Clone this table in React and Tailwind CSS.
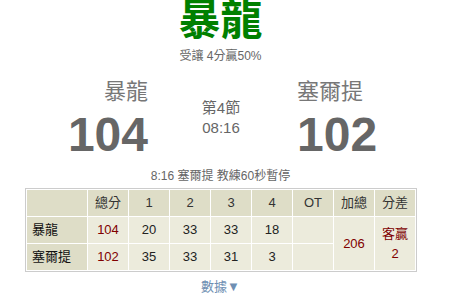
const CJK = "font-['Liberation_Sans','Noto_Sans_CJK_TC',sans-serif]";

const quarters = [
  { team: '暴龍', total: 104, q: [20, 33, 33, 18] },
  { team: '塞爾提', total: 102, q: [35, 33, 31, 3] },
];

export default function App() {
  return (
    <div className={`w-[441px] bg-white text-center text-[#666] ${CJK}`}>
      <div className="text-[42px] font-bold leading-[42px] text-[#008000]">暴龍</div>
      <div className="mt-[7px] text-[12px] leading-[14px]">受讓 4分贏50%</div>

      <div className="flex mt-[14px]">
        <div className="w-[148px] text-right">
          <div className="text-[22px] leading-[30px] text-[#777]">暴龍</div>
          <div className="mt-[3px] text-[48px] font-bold leading-[50px] text-[#666]">104</div>
        </div>
        <div className="w-[146px] pt-[21px] text-[15px] leading-[20px] text-[#666]">
          <div>第4節</div>
          <div>08:16</div>
        </div>
        <div className="pl-[3px] text-left">
          <div className="text-[22px] leading-[30px] text-[#777]">塞爾提</div>
          <div className="mt-[3px] text-[48px] font-bold leading-[50px] text-[#666]">102</div>
        </div>
      </div>

      <div className="mt-[9px] text-[12px] leading-[14px]">8:16 塞爾提 教練60秒暫停</div>

      <table className="mt-[5px] ml-[25px] border border-[#cccccc] border-separate border-spacing-[1px] bg-white text-[13px] text-[#222]">
        <thead>
          <tr className="h-[26px] bg-[#deddc7]">
            <th className="w-[60px] p-0 font-normal"></th>
            {['總分', '1', '2', '3', '4', 'OT', '加總', '分差'].map((h) => (
              <th key={h} className="w-[40px] p-0 font-normal text-[#333]">{h}</th>
            ))}
          </tr>
        </thead>
        <tbody>
          {quarters.map((row, i) => (
            <tr key={row.team} className="h-[26px]">
              <td className="bg-[#deddc7] p-0 pl-[5px] text-left text-[#111]">{row.team}</td>
              <td className="bg-[#ecebdc] p-0 text-[#800000]">{row.total}</td>
              {row.q.map((v, j) => (
                <td key={j} className="bg-[#ecebdc] p-0">{v}</td>
              ))}
              <td className="bg-[#ecebdc] p-0"></td>
              {i === 0 && (
                <>
                  <td rowSpan={2} className="bg-[#ecebdc] p-0 text-[#800000]">206</td>
                  <td rowSpan={2} className="bg-[#ecebdc] p-0 leading-[20px] text-[#800000]">
                    客贏<br />2
                  </td>
                </>
              )}
            </tr>
          ))}
        </tbody>
      </table>

      <div className="mt-[7px] text-[13px] leading-[16px] text-[#6f8fb3]">數據▼</div>
    </div>
  );
}
